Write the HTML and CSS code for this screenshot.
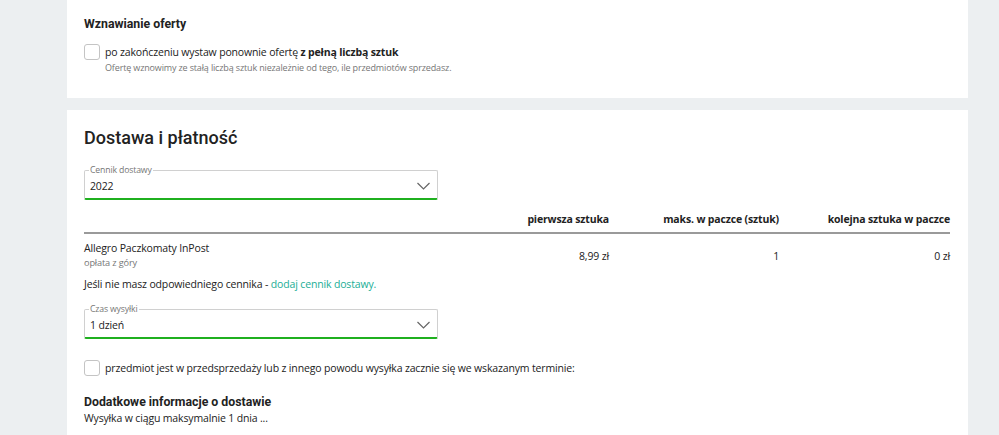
FILE: index.html
```html
<!DOCTYPE html>
<html lang="pl">
<head>
    <meta charset="UTF-8">
    <title>Wystaw ofertę</title>
    <link rel="stylesheet" href="styles.css">
</head>
<body>
    <div class="page">
        <section class="card card-top">
            <h3 class="sub-title">Wznawianie oferty</h3>
            <label class="check-row">
                <span class="checkbox"></span>
                <span class="check-text">
                    po zakończeniu wystaw ponownie ofertę <b>z pełną liczbą sztuk</b>
                    <small class="hint">Ofertę wznowimy ze stałą liczbą sztuk niezależnie od tego, ile przedmiotów sprzedasz.</small>
                </span>
            </label>
        </section>

        <section class="card card-delivery">
            <h2 class="title">Dostawa i płatność</h2>

            <fieldset class="select">
                <legend>Cennik dostawy</legend>
                <span class="value">2022</span>
                <svg class="chevron" width="13" height="8" viewBox="0 0 13 8"><path d="M0.5 1l6 6 6-6" fill="none" stroke="#666" stroke-width="1.2"/></svg>
            </fieldset>

            <div class="price-table">
                <div class="row head">
                    <span></span>
                    <span>pierwsza sztuka</span>
                    <span>maks. w paczce (sztuk)</span>
                    <span>kolejna sztuka w paczce</span>
                </div>
                <div class="row body">
                    <span class="method">Allegro Paczkomaty InPost<small>opłata z góry</small></span>
                    <span>8,99 zł</span>
                    <span>1</span>
                    <span>0 zł</span>
                </div>
            </div>

            <p class="note">Jeśli nie masz odpowiedniego cennika - <a href="#">dodaj cennik dostawy.</a></p>

            <fieldset class="select">
                <legend>Czas wysyłki</legend>
                <span class="value">1 dzień</span>
                <svg class="chevron" width="13" height="8" viewBox="0 0 13 8"><path d="M0.5 1l6 6 6-6" fill="none" stroke="#666" stroke-width="1.2"/></svg>
            </fieldset>

            <label class="check-row check-presale">
                <span class="checkbox"></span>
                <span class="check-text">przedmiot jest w przedsprzedaży lub z innego powodu wysyłka zacznie się we wskazanym terminie:</span>
            </label>

            <h3 class="sub-title extra">Dodatkowe informacje o dostawie</h3>
            <p class="extra-text">Wysyłka w ciągu maksymalnie 1 dnia ...</p>
        </section>
    </div>
</body>
</html>
```

FILE: styles.css
```css
body {
    margin: 0;
    background-color: #eceff1;
    font-family: "Open Sans", Arial, sans-serif;
    font-size: 10.5px;
    letter-spacing: -0.15px;
    color: #222222;
}

.page {
    width: 901px;
    margin-left: 67px;
    display: flex;
    flex-direction: column;
    gap: 12px;
}

.card {
    background-color: #ffffff;
    padding: 0 18px 0 17px;
}

.card-top {
    height: 98px;
    box-sizing: border-box;
    padding-top: 16px;
}

.card-delivery {
    padding-top: 16px;
    height: 340px;
    box-sizing: border-box;
}

.sub-title {
    font-family: Roboto, Arial, sans-serif;
    font-size: 12.3px;
    letter-spacing: 0;
    font-weight: bold;
    margin: 0 0 12px 0;
    line-height: 16px;
}

.title {
    font-family: Roboto, Arial, sans-serif;
    font-size: 18px;
    letter-spacing: 0;
    font-weight: 500;
    margin: 0 0 15px 0;
    line-height: 24px;
}

.check-row {
    display: flex;
    gap: 5px;
    align-items: flex-start;
}

.checkbox {
    width: 14px;
    height: 14px;
    border: 1px solid #c4c4c4;
    border-radius: 3px;
    flex-shrink: 0;
}

.check-text {
    line-height: 16px;
}

.hint {
    display: block;
    font-size: 9px;
    color: #767676;
    line-height: 16px;
}

.select {
    width: 354px;
    box-sizing: border-box;
    margin: 0;
    padding: 3px 7px 4px 5px;
    border: 1px solid #d0d0d0;
    border-bottom: 2px solid #1fb01f;
    border-radius: 2px;
    display: flex;
    align-items: center;
    justify-content: space-between;
}

.select legend {
    font-size: 8.7px;
    color: #767676;
    padding: 0 1px;
    margin-left: -1px;
    line-height: 10px;
}

.select .value {
    line-height: 16px;
}

.price-table {
    margin-top: 11px;
}

.row {
    display: grid;
    grid-template-columns: 1fr 170px 170px 171px;
}

.row span {
    text-align: right;
}

.row.head {
    font-weight: bold;
    padding-bottom: 5px;
    border-bottom: 2px solid #9a9a9a;
    line-height: 16px;
}

.row.body {
    align-items: center;
    padding-top: 7px;
    line-height: 14px;
}

.row .method {
    text-align: left;
}

.method small {
    display: block;
    font-size: 9.2px;
    color: #767676;
    line-height: 16px;
}

.note {
    margin: 5px 0 12px 0;
    line-height: 16px;
}

.note a {
    color: #1bae96;
    text-decoration: none;
}

.check-presale {
    margin-top: 21px;
}

.extra {
    margin: 18px 0 0 0;
}

.extra-text {
    margin: 0;
    line-height: 16px;
}
```
